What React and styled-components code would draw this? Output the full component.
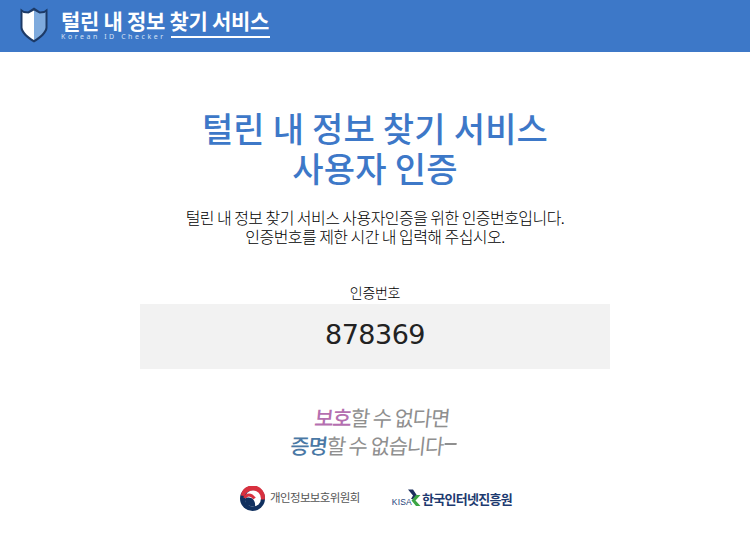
import React from "react";
import styled, { createGlobalStyle } from "styled-components";

const Global = createGlobalStyle`
  html, body { margin: 0; padding: 0; background: #fff; }
  body { font-family: "Noto Sans CJK KR", "Noto Sans", sans-serif; color: #222; }
`;
const Page = styled.div`display: flex; flex-direction: column; min-height: 549px;`;
const Header = styled.header`
  height: 52px; background: #3d78c8; display: flex; align-items: center;
  padding-left: 20px; gap: 13px; box-sizing: border-box;
`;
const ShieldSlot = styled.div`display: flex; margin-top: -3px;`;
const Brand = styled.div`display: flex; flex-direction: column; width: 209px; margin-top: -3px;`;
const BrandName = styled.div`
  color: #fff; font-size: 21px; font-weight: 700; line-height: 24px; white-space: nowrap; letter-spacing: -0.3px;
`;
const BrandSub = styled.div`display: flex; align-items: center; gap: 5px; height: 10px;`;
const BrandEn = styled.span`
  color: #d5e2f4; font-family: "Noto Sans", sans-serif; font-size: 7px; letter-spacing: 2.55px; white-space: nowrap; line-height: 10px;
`;
const BrandRule = styled.span`flex: 1; height: 2px; background: #fff;`;
const Main = styled.main`display: flex; flex-direction: column; align-items: center; padding-top: 56px;`;
const Title = styled.h1`
  margin: 0; color: #3d78c8; font-size: 34px; font-weight: 500; line-height: 39.5px; text-align: center; letter-spacing: 0.2px;
`;
const Desc = styled.p`
  margin: 21px 0 0; font-size: 16px; font-weight: 300; line-height: 19px; text-align: center; letter-spacing: -0.55px; color: #000;
`;
const Label = styled.div`margin-top: 36px; font-size: 14px; font-weight: 300; line-height: 20px; letter-spacing: -0.3px; color: #000;`;
const Code = styled.div`
  width: 470px; height: 65px; margin-top: 1.5px; background: #f2f2f2; display: flex; align-items: center; justify-content: center;
  font-family: "DejaVu Sans", sans-serif; font-size: 27px; color: #222; letter-spacing: -0.5px; padding-bottom: 3px; box-sizing: border-box;
`;
const Slogan = styled.div`
  margin-top: 34px; display: flex; flex-direction: column; align-items: center; font-size: 21px; line-height: 28px;
  font-weight: 400; color: #8f8f8f; letter-spacing: -1.1px; white-space: nowrap; transform: skewX(-6deg);
`;
const Line = styled.div`
  display: flex; align-items: center; margin-left: ${p => p.$left}px;
`;
const Accent = styled.span`color: ${p => p.$color}; font-weight: 500;`;
const Tail = styled.span`width: 12px; height: 2px; background: #8f8f8f; margin-left: 1px; margin-top: -2px;`;
const Logos = styled.div`display: flex; align-items: center; margin-top: 27px; gap: 32px; margin-left: 2px;`;
const Org = styled.div`display: flex; align-items: center; gap: ${p => p.$gap}px;`;
const OrgName = styled.span`
  font-size: ${p => p.$size}px; color: ${p => p.$color}; font-weight: ${p => p.$weight}; letter-spacing: ${p => p.$spacing}px; white-space: nowrap; line-height: 1;
`;
const Kisa = styled.span`
  font-family: "Liberation Sans", sans-serif; font-size: 8.5px; color: #1f3f7a; align-self: flex-end; margin-right: -8px; line-height: 10px; letter-spacing: 0.2px;
`;

const Shield = () => (
  <svg width="28" height="36" viewBox="0 0 28 36">
    <path d="M14 0.500L20 4.500L24 4L27.500 1.500V21C27 26 21 31.500 14 35.500C7 31.500 1 26 0.500 21V1.500L4 4L8 4.500Z" fill="#1d3a66" />
    <path d="M14 3.500L8.500 6.500L3.500 6L2.500 5V20.500C3 25 8.500 29.500 14 33Z" fill="#fff" />
    <path d="M14 3.500L19.500 6.500L24.500 6L25.500 5V20.500C25 25 19.500 29.500 14 33Z" fill="#7eaadd" />
  </svg>
);
const Emblem = () => (
  <svg width="25" height="25" viewBox="0 0 25 25">
    <circle cx="12.500" cy="12.500" r="12.500" fill="#10305f" />
    <path d="M0.800 9.500A12 12 0 0 1 24.800 13.500L20.800 13.500A8.500 8.500 0 0 0 4.500 10Z" fill="#d8303f" />
    <circle cx="13" cy="12.500" r="8" fill="#fff" />
    <path d="M4.500 12C6.500 8 11 7.500 14.500 12.500" fill="none" stroke="#d8303f" strokeWidth="3" />
    <path d="M4.800 13C7 11 11 11 13.500 13.800C14.500 15.500 15.500 17 15 21L6 19Z" fill="#10305f" />
  </svg>
);
const KisaMark = () => (
  <svg width="16" height="18" viewBox="0 0 16 18">
    <path d="M3 0.500L8 0.500L12 6.500L8 10L6 10L8 6.500Z" fill="#1d2f5e" />
    <path d="M15.500 6L10.500 11.500L15.500 17L11 17L6.500 11.500L11 6Z" fill="#3ca544" />
  </svg>
);

export default function App() {
  return (
    <Page>
      <Global />
      <Header>
        <ShieldSlot><Shield /></ShieldSlot>
        <Brand>
          <BrandName>털린 내 정보 찾기 서비스</BrandName>
          <BrandSub>
            <BrandEn>Korean ID Checker</BrandEn>
            <BrandRule />
          </BrandSub>
        </Brand>
      </Header>
      <Main>
        <Title>털린 내 정보 찾기 서비스<br />사용자 인증</Title>
        <Desc>털린 내 정보 찾기 서비스 사용자인증을 위한 인증번호입니다.<br />인증번호를 제한 시간 내 입력해 주십시오.</Desc>
        <Label>인증번호</Label>
        <Code>878369</Code>
        <Slogan>
          <Line $left={11}><Accent $color="#b56fb0">보호</Accent>할 수 없다면</Line>
          <Line $left={0}><Accent $color="#4a78a5">증명</Accent>할 수 없습니다<Tail /></Line>
        </Slogan>
        <Logos>
          <Org $gap={5}>
            <Emblem />
            <OrgName $size={11.5} $color="#555" $weight={400} $spacing={-0.6}>개인정보보호위원회</OrgName>
          </Org>
          <Org $gap={1}>
            <Kisa>KISA</Kisa>
            <KisaMark />
            <OrgName $size={13} $color="#1d3a70" $weight={700} $spacing={-0.7}>한국인터넷진흥원</OrgName>
          </Org>
        </Logos>
      </Main>
    </Page>
  );
}
